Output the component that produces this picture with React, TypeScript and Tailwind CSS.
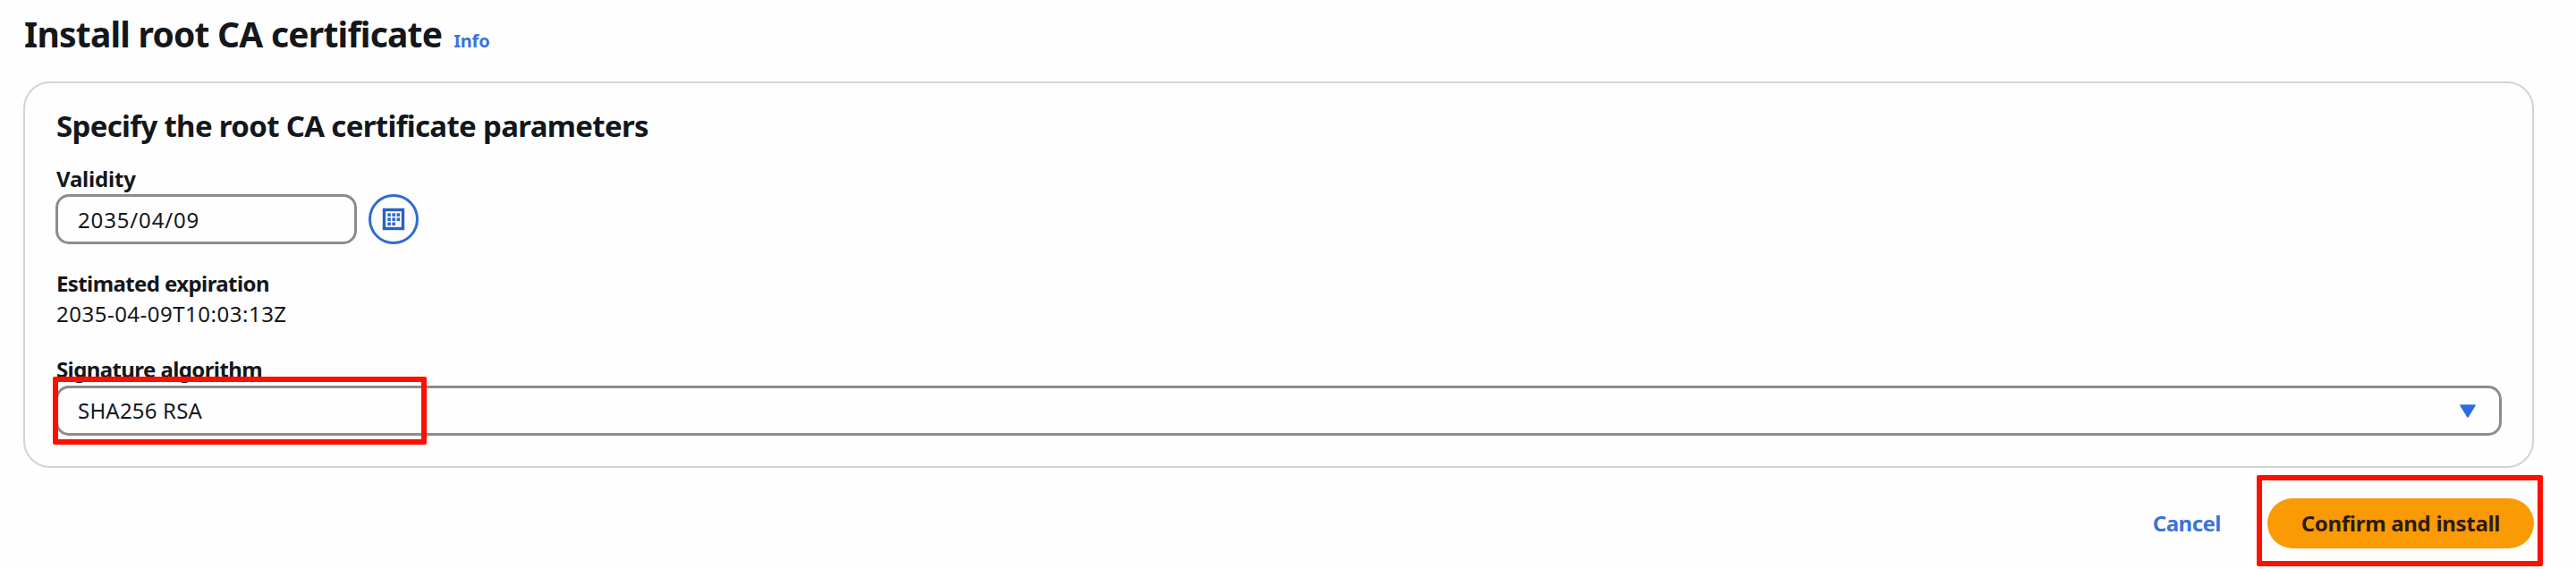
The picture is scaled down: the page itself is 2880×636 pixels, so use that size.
function CalendarIcon() {
  return (
    <svg width="26" height="26" viewBox="0 0 26 26" fill="none">
      <rect x="2.5" y="2.5" width="21" height="21" stroke="#2b63bf" strokeWidth="3.4" />
      <g fill="#2f69c8">
        <rect x="6.3" y="6.3" width="3.6" height="3.6" />
        <rect x="11.4" y="6.3" width="3.6" height="3.6" />
        <rect x="16.5" y="6.3" width="3.6" height="3.6" />
        <rect x="6.3" y="11.4" width="3.6" height="3.6" />
        <rect x="11.4" y="11.4" width="3.6" height="3.6" />
        <rect x="16.5" y="11.4" width="3.6" height="3.6" />
        <rect x="6.3" y="16.5" width="3.6" height="3.6" />
        <rect x="11.4" y="16.5" width="3.6" height="3.6" />
      </g>
    </svg>
  );
}

function Label({ children, className = "" }: { children: string; className?: string }) {
  return <div className={`pl-px text-[24px] leading-8 font-bold text-[#14171c] ${className}`}>{children}</div>;
}

export default function App() {
  return (
    <div className="relative h-[636px] w-[2880px] overflow-hidden bg-[#fefefe] pt-3.5 pr-[47px] pl-[26px] font-['Noto_Sans',sans-serif] text-[#14171c]">
      <header className="flex h-12 items-baseline pl-px">
        <h1 className="text-[39px] leading-[48px] font-bold tracking-[-0.78px]">
          Install root CA certificate
        </h1>
        <a className="ml-[13px] text-[20px] font-bold tracking-[-0.2px] text-[#3a74d8]">Info</a>
      </header>

      <section className="mt-[29px] h-[432px] rounded-[30px] border-2 border-[#d2d3d4] bg-[#fefefe] px-[34px] pt-7">
        <h2 className="pl-px text-[33px] leading-10 font-bold tracking-[-0.67px]">Specify the root CA certificate parameters</h2>

        <Label className="mt-[23px] tracking-[-0.2px]">Validity</Label>
        <div className="mt-px flex items-center gap-[13px]">
          <div className="flex h-14 w-[337px] items-center rounded-[15px] border-3 border-[#8b8c8d] pt-0.5 pl-[22px] text-[24px] tracking-[0.85px]">
            2035/04/09
          </div>
          <button className="flex size-14 items-center justify-center rounded-full border-3 border-[#2f6bd0]">
            <CalendarIcon />
          </button>
        </div>

        <Label className="mt-7 tracking-[-0.6px]">Estimated expiration</Label>
        <div className="mt-0.5 pl-px text-[24px] leading-8 tracking-[0.5px]">2035-04-09T10:03:13Z</div>

        <Label className="mt-[30px] tracking-[-0.6px]">Signature algorithm</Label>
        <div className="mt-0.5 flex h-14 items-center justify-between rounded-[15px] border-3 border-[#8b8c8d] pr-[26px] pl-[22px] text-[24px] tracking-[0.2px]">
          <span>SHA256 RSA</span>
          <svg width="18" height="16" viewBox="0 0 18 16">
            <path d="M1 2H17L9 15Z" fill="#2b6cdf" stroke="#2b6cdf" strokeWidth="1.5" strokeLinejoin="round" />
          </svg>
        </div>
      </section>

      <footer className="mt-[34px] flex items-center justify-end text-[24px] font-bold tracking-[-0.3px]">
        <button className="mr-[52px] tracking-[-0.5px] text-[#3a74d8]">Cancel</button>
        <button className="h-14 w-[298px] rounded-full bg-[#fa9b05] text-[#2b1c0c]">Confirm and install</button>
      </footer>

      <div className="absolute top-[421px] left-[59px] h-[76px] w-[418px] rounded-[2px] border-6 border-[#ff0f00]" />
      <div className="absolute top-[531px] left-[2523px] h-[102px] w-[320px] rounded-[2px] border-6 border-[#ff0f00]" />
    </div>
  );
}
